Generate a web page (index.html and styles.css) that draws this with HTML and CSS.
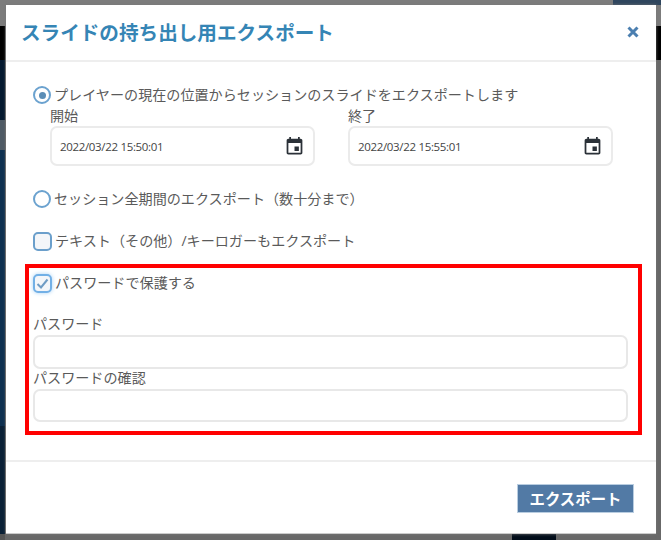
FILE: index.html
```html
<!DOCTYPE html>
<html lang="ja">
<head>
    <meta charset="utf-8">
    <title>スライドの持ち出し用エクスポート</title>
    <link rel="stylesheet" href="styles.css">
</head>
<body>
    <div class="modal">
        <div class="modal-header">
            <h1 class="modal-title">スライドの持ち出し用エクスポート</h1>
            <svg class="close-icon" width="12" height="12" viewBox="0 0 12 12"><path d="M1.5 1.5L10.5 10.5M10.5 1.5L1.5 10.5"/></svg>
        </div>

        <div class="modal-body">
            <div class="option option-first">
                <span class="radio radio-on"></span>
                <span>プレイヤーの現在の位置からセッションのスライドをエクスポートします</span>
            </div>
            <div class="date-row">
                <div class="date-col">
                    <div class="label label-date">開始</div>
                    <div class="date-input">
                        <span>2022/03/22 15:50:01</span>
                        <svg width="21" height="21" viewBox="0 0 24 24"><path d="M17 12h-5v5h5v-5zM16 1v2H8V1H6v2H5c-1.11 0-1.99.9-1.99 2L3 19c0 1.1.89 2 2 2h14c1.1 0 2-.9 2-2V5c0-1.1-.9-2-2-2h-1V1h-2zm3 18H5V8h14v11z"/></svg>
                    </div>
                </div>
                <div class="date-col">
                    <div class="label label-date">終了</div>
                    <div class="date-input">
                        <span>2022/03/22 15:55:01</span>
                        <svg width="21" height="21" viewBox="0 0 24 24"><path d="M17 12h-5v5h5v-5zM16 1v2H8V1H6v2H5c-1.11 0-1.99.9-1.99 2L3 19c0 1.1.89 2 2 2h14c1.1 0 2-.9 2-2V5c0-1.1-.9-2-2-2h-1V1h-2zm3 18H5V8h14v11z"/></svg>
                    </div>
                </div>
            </div>
            <div class="option option-all">
                <span class="radio"></span>
                <span>セッション全期間のエクスポート（数十分まで）</span>
            </div>
            <div class="option option-text">
                <span class="check"></span>
                <span>テキスト（その他）/キーロガーもエクスポート</span>
            </div>

            <div class="password-box">
                <div class="option">
                    <span class="check check-on">
                        <svg width="15" height="15" viewBox="0 0 15 15"><path d="M2.5 8L6 11.5L12.5 3.5"/></svg>
                    </span>
                    <span>パスワードで保護する</span>
                </div>
                <div class="label label-pass">パスワード</div>
                <input class="text-input" type="password">
                <div class="label label-confirm">パスワードの確認</div>
                <input class="text-input text-input-confirm" type="password">
            </div>
        </div>

        <div class="modal-footer">
            <button class="export-btn">エクスポート</button>
        </div>
    </div>
</body>
</html>
```

FILE: styles.css
```css
html, body {
    height: 100%;
}
body {
    margin: 0;
    height: 540px;
    overflow: hidden;
    box-sizing: border-box;
    padding: 5px 5px 6px 6px;
    font-family: "Open Sans", "Noto Sans CJK JP", sans-serif;
    font-size: 14.1px;
    color: #5a5a5a;
    background-color: #686868;
    background-image:
        linear-gradient(#2f465e, #2f465e),
        linear-gradient(#020d1a, #020d1a),
        linear-gradient(#000, #000),
        linear-gradient(#7c7c7c, #7c7c7c),
        linear-gradient(#000 0 34px, #04192f 34px 94px, #4e5a64 94px 124px, #0e3050 124px 400px, #0a2036 400px 508px, #555 508px);
    background-repeat: no-repeat;
    background-size: 48px 5px, 44px 6px, 5px 34px, 661px 26px, 5px 514px;
    background-position: 613px 0, 512px 534px, 656px 26px, 0 0, 0 26px;
}
.modal {
    height: 529px;
    box-sizing: border-box;
    display: flex;
    flex-direction: column;
    background-color: #fff;
    border-bottom: 1px solid #ccc;
    box-shadow: 0 0 3px rgba(120, 120, 120, 0.9);
}
.modal-header {
    height: 57px;
    flex: none;
    box-sizing: border-box;
    display: flex;
    align-items: center;
    justify-content: space-between;
    padding: 0 17px 2px 15px;
    border-bottom: 2px solid #eeeeee;
}
.modal-title {
    margin: 0;
    font-size: 19.6px;
    font-weight: 700;
    color: #3585b5;
}
.close-icon path {
    fill: none;
    stroke: #4b7fb0;
    stroke-width: 3;
}
.modal-body {
    flex: 1;
    padding: 23px 14px 0 19px;
}
.option {
    display: flex;
    align-items: center;
    gap: 3px;
    height: 20px;
    padding-left: 8px;
    line-height: 20px;
}
.option-all {
    margin-top: 23px;
}
.option-text {
    margin-top: 22px;
}
.radio {
    width: 18px;
    height: 18px;
    box-sizing: border-box;
    border: 2px solid #6ba2cf;
    border-radius: 50%;
    display: flex;
    align-items: center;
    justify-content: center;
}
.radio-on::after {
    content: "";
    width: 7px;
    height: 7px;
    border-radius: 50%;
    background-color: #5b8db6;
}
.check {
    width: 19px;
    height: 19px;
    box-sizing: border-box;
    border: 2px solid #6b9fcb;
    border-radius: 5px;
    background-color: #f4f6f9;
    display: flex;
    align-items: center;
    justify-content: center;
}
.check-on {
    border-color: #72b0e6;
    box-shadow: 0 0 4px #a9d3f5;
}
.check-on path {
    fill: none;
    stroke: #6f9cc4;
    stroke-width: 2;
}
.date-row {
    display: flex;
    gap: 33px;
    padding-left: 25px;
}
.label {
    line-height: 22px;
    height: 22px;
}
.label-date {
    height: 21px;
}
.date-input {
    width: 265px;
    height: 40px;
    box-sizing: border-box;
    display: flex;
    align-items: center;
    justify-content: space-between;
    padding: 0 8px 0 8px;
    border: 2px solid #ebebeb;
    border-radius: 7px;
    font-size: 11.5px;
    letter-spacing: -0.33px;
    color: #444;
}
.date-input svg {
    fill: #2b3138;
}
.password-box {
    margin-top: 13px;
    width: 617px;
    height: 171px;
    box-sizing: border-box;
    border: 4px solid #ff0000;
    padding: 5px 0 0 0;
}
.password-box .option {
    padding-left: 4px;
}
.password-box .label {
    padding-left: 4px;
}
.label-pass {
    margin-top: 20px;
}
.label-confirm {
    margin-top: -2px;
}
.text-input {
    display: block;
    width: 595px;
    height: 34px;
    margin-left: 4px;
    box-sizing: border-box;
    border: 2px solid #e8e8e8;
    border-radius: 7px;
    background-color: #fff;
    outline: none;
}
.text-input-confirm {
    height: 33px;
}
.modal-footer {
    height: 73px;
    flex: none;
    box-sizing: border-box;
    display: flex;
    justify-content: flex-end;
    align-items: flex-start;
    padding: 22px 22px 0 0;
    border-top: 2px solid #eeeeee;
}
.export-btn {
    width: 117px;
    height: 29px;
    padding: 0;
    border: 1px solid #b9cde0;
    background-color: #527aa5;
    color: #fff;
    font-family: "Open Sans", "Noto Sans CJK JP", sans-serif;
    font-size: 15.4px;
    font-weight: 700;
}
```
